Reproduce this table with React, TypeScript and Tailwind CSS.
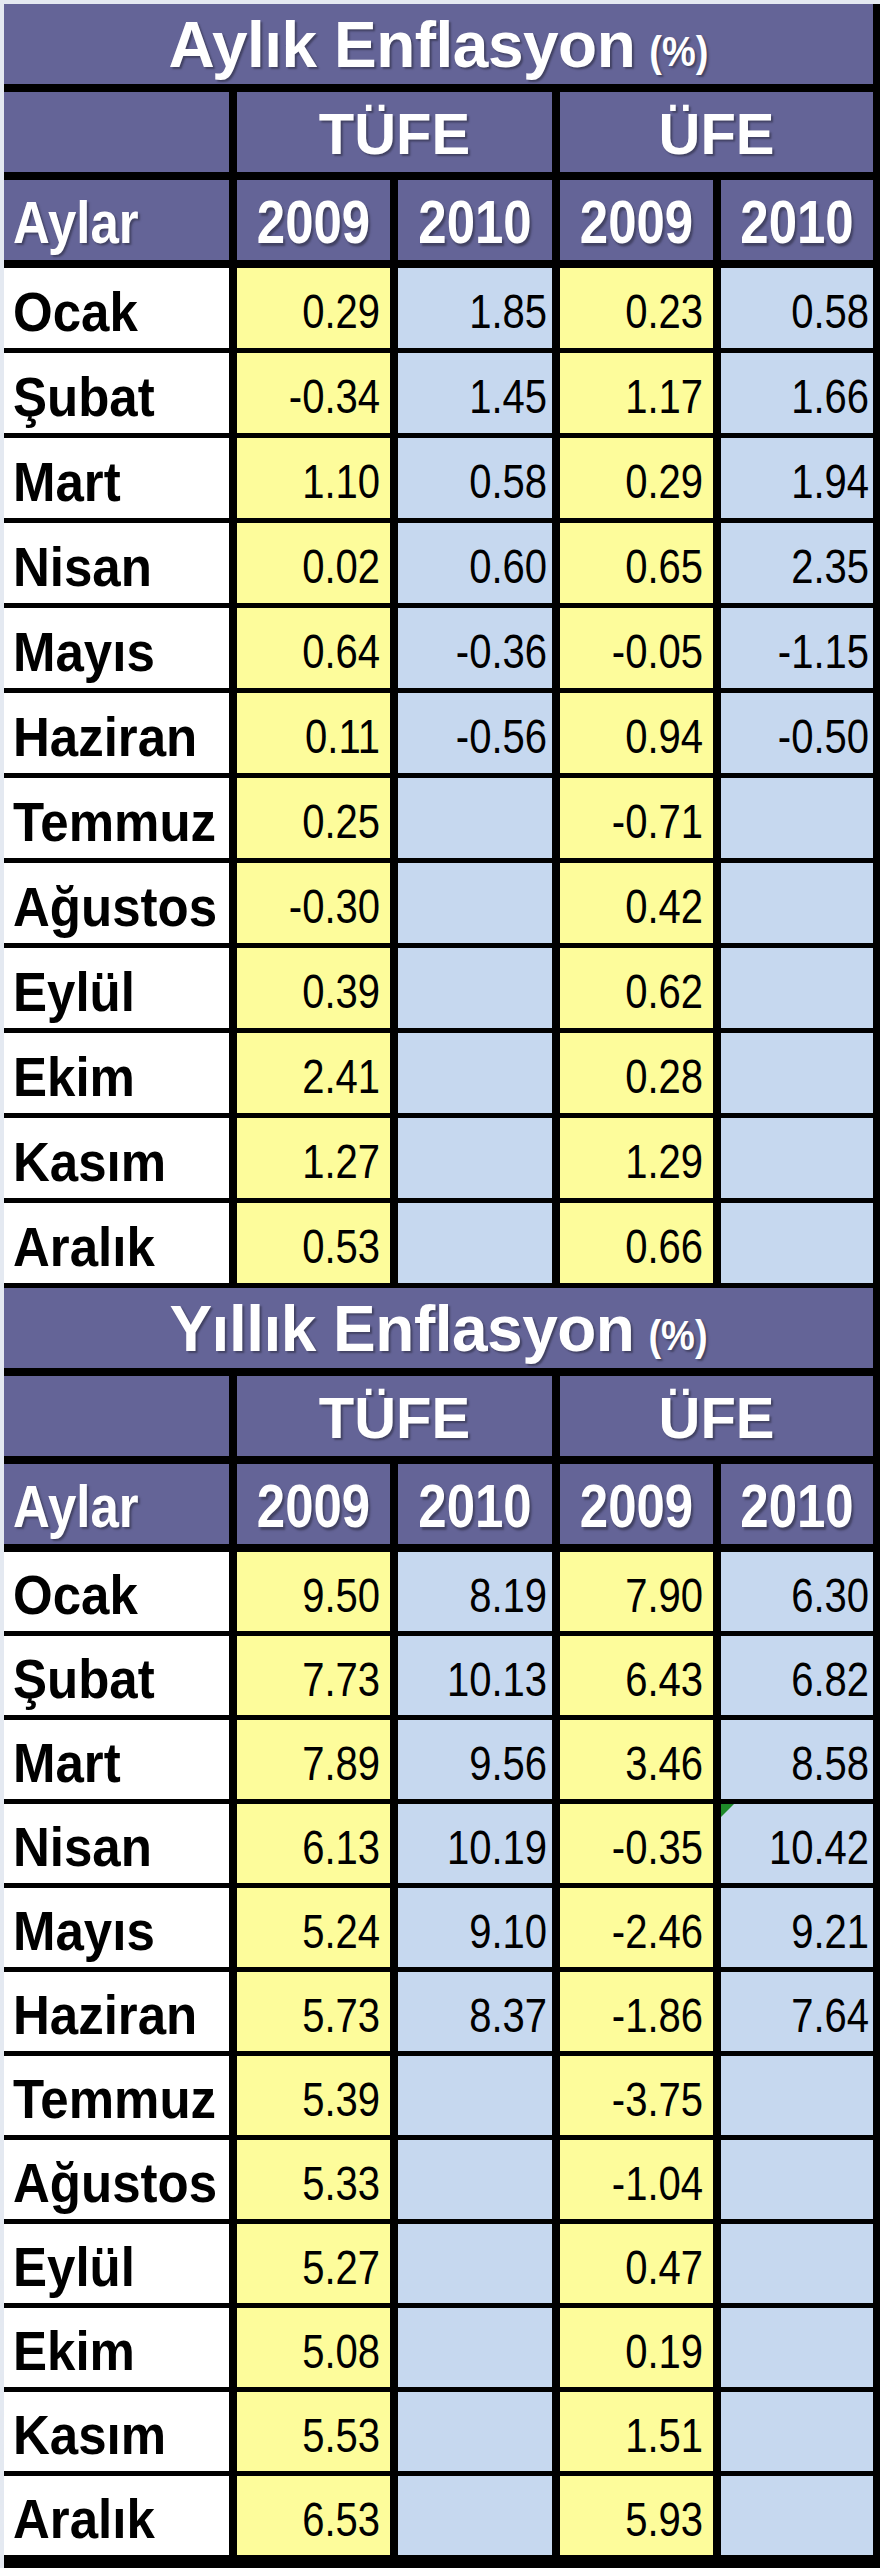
import React from "react";

// Excel-style inflation tables (Aylık / Yıllık)
type Row = [string, string, string, string, string];

const monthly: Row[] = [
  ["Ocak", "0.29", "1.85", "0.23", "0.58"],
  ["Şubat", "-0.34", "1.45", "1.17", "1.66"],
  ["Mart", "1.10", "0.58", "0.29", "1.94"],
  ["Nisan", "0.02", "0.60", "0.65", "2.35"],
  ["Mayıs", "0.64", "-0.36", "-0.05", "-1.15"],
  ["Haziran", "0.11", "-0.56", "0.94", "-0.50"],
  ["Temmuz", "0.25", "", "-0.71", ""],
  ["Ağustos", "-0.30", "", "0.42", ""],
  ["Eylül", "0.39", "", "0.62", ""],
  ["Ekim", "2.41", "", "0.28", ""],
  ["Kasım", "1.27", "", "1.29", ""],
  ["Aralık", "0.53", "", "0.66", ""],
];

const yearly: Row[] = [
  ["Ocak", "9.50", "8.19", "7.90", "6.30"],
  ["Şubat", "7.73", "10.13", "6.43", "6.82"],
  ["Mart", "7.89", "9.56", "3.46", "8.58"],
  ["Nisan", "6.13", "10.19", "-0.35", "10.42"],
  ["Mayıs", "5.24", "9.10", "-2.46", "9.21"],
  ["Haziran", "5.73", "8.37", "-1.86", "7.64"],
  ["Temmuz", "5.39", "", "-3.75", ""],
  ["Ağustos", "5.33", "", "-1.04", ""],
  ["Eylül", "5.27", "", "0.47", ""],
  ["Ekim", "5.08", "", "0.19", ""],
  ["Kasım", "5.53", "", "1.51", ""],
  ["Aralık", "6.53", "", "5.93", ""],
];

const font = "font-['Liberation_Sans',Arial,sans-serif]";
const grid = "grid grid-cols-[225px_153px_154px_153px_152px] gap-x-[8px] pr-[7px]";
const head = "bg-[#646497] text-white font-bold leading-none flex items-center [text-shadow:2px_2px_2px_rgba(0,0,0,0.35)]";
const num = "flex items-center justify-end pt-[6px] text-[40px] leading-none text-black";

function Table({ title, rows, dataH, warnRow }: { title: string; rows: Row[]; dataH: string; warnRow?: number }) {
  return (
    <div className="flex flex-col">
      {/* title */}
      <div className="pr-[7px] mb-[8px]">
        <div className={`${head} h-[80px] justify-center pt-[2px]`}>
          <span className="text-[64px] tracking-[-0.5px]">{title}</span>
          <span className="text-[38px] ml-[14px] mt-[12px] scale-y-[1.12]">(%)</span>
        </div>
      </div>

      {/* TÜFE / ÜFE */}
      <div className={`${grid} mb-[8px]`}>
        <div className={`${head} h-[80px]`} />
        <div className={`${head} h-[80px] col-span-2 justify-center text-[58px] pt-[4px]`}>TÜFE</div>
        <div className={`${head} h-[80px] col-span-2 justify-center text-[58px] pt-[4px]`}>ÜFE</div>
      </div>

      {/* years */}
      <div className={`${grid} mb-[8px]`}>
        <div className={`${head} h-[80px] pl-[9px] text-[51px] pt-[4px]`}>
          <span className="scale-y-[1.15] origin-left">Aylar</span>
        </div>
        {["2009", "2010", "2009", "2010"].map((y, i) => (
          <div key={i} className={`${head} h-[80px] justify-center text-[51px] pt-[4px]`}>
            <span className="scale-y-[1.18]">{y}</span>
          </div>
        ))}
      </div>

      {rows.map((r, i) => (
        <div key={r[0]} className={`${grid} mb-[5px] ${dataH}`}>
          <div className="bg-white flex items-center pl-[9px] pt-[6px] text-[51px] font-bold leading-none text-black">
            <span className="scale-y-[1.1] whitespace-nowrap">{r[0]}</span>
          </div>
          <div className={`${num} bg-[#fdfc9b] pr-[10px]`}><span className="scale-y-[1.2]">{r[1]}</span></div>
          <div className={`${num} bg-[#c6d8ef] pr-[5px]`}><span className="scale-y-[1.2]">{r[2]}</span></div>
          <div className={`${num} bg-[#fdfc9b] pr-[10px]`}><span className="scale-y-[1.2]">{r[3]}</span></div>
          <div className={`${num} bg-[#c6d8ef] pr-[4px] relative`}>
            {warnRow === i && (
              <div className="absolute left-0 top-0 w-0 h-0 border-t-[13px] border-t-[#1f8a2a] border-r-[13px] border-r-transparent" />
            )}
            <span className="scale-y-[1.2]">{r[4]}</span>
          </div>
        </div>
      ))}
    </div>
  );
}

export default function App() {
  return (
    <div className={`w-[880px] h-[2568px] overflow-hidden bg-[#e4e9f1] pt-[4px] pl-[4px] ${font}`}>
      <div className="bg-black h-full">
        <Table title="Aylık Enflasyon" rows={monthly} dataH="h-[80px]" />
        <Table title="Yıllık Enflasyon" rows={yearly} dataH="h-[79px]" warnRow={3} />
      </div>
    </div>
  );
}
